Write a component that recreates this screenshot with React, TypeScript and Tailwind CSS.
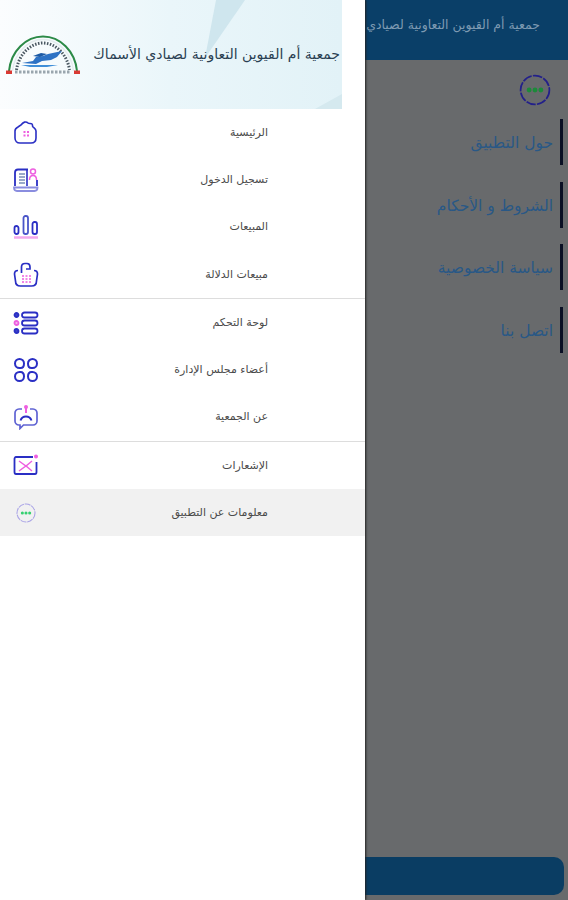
const arabic = { fontFamily: '"DejaVu Sans", "Noto Sans", sans-serif' };

const stroke = "#2a2fc4";
const accent = "#ee5fe0";

function HomeIcon() {
  return (
    <svg width="26" height="26" viewBox="0 0 26 26" fill="none" stroke={stroke} strokeWidth="1.6">
      <path d="M2 11c0-2 1-3 3-4l3-2c2-3 5-4 7-2 1 1 3 0 4 1s0 2 1 3 3 2 3 4v7c0 3-2 5-5 5H7c-3 0-5-2-5-5z" />
      <g fill={accent} stroke="none">
        <rect x="10.5" y="11" width="2" height="2" />
        <rect x="14" y="11" width="2" height="2" />
        <rect x="10.5" y="14.5" width="2" height="2" />
        <rect x="14" y="14.5" width="2" height="2" />
      </g>
    </svg>
  );
}

function LoginIcon() {
  return (
    <svg width="26" height="26" viewBox="0 0 26 26" fill="none" stroke={stroke} strokeWidth="1.8">
      <path d="M15 2.500H5C3 2.500 2 3.500 2 5.500V19" />
      <path d="M1 20.500h23.500c0 2.500-1 3.500-3 3.500H4c-2 0-3-1-3-3.500z" strokeOpacity="0.55" />
      <path d="M6 7h6M6 10h6M6 13h6M6 16h6" stroke="#7a8fb8" strokeWidth="1.500" />
      <path d="M14 2.500V19" strokeWidth="1.600" />
      <circle cx="20" cy="4.500" r="2.500" stroke={accent} strokeWidth="1.500" />
      <path d="M16.500 13c0-3 1.500-4.500 3.500-4.500s3.500 1.500 3.500 4.500" stroke={accent} strokeWidth="1.500" />
      <path d="M24 13v6" />
    </svg>
  );
}

function ChartIcon() {
  return (
    <svg width="26" height="26" viewBox="0 0 26 26" fill="none" stroke={stroke} strokeWidth="1.800">
      <rect x="10.500" y="2" width="4.500" height="18" rx="2" stroke="#4a55c8" />
      <rect x="1.500" y="12" width="4" height="8" rx="2" />
      <rect x="19.500" y="8" width="4.500" height="12" rx="2" />
      <path d="M1 23.500h24" stroke="#f3a8ec" strokeWidth="2.500" />
    </svg>
  );
}

function BasketIcon() {
  return (
    <svg width="26" height="26" viewBox="0 0 26 26" fill="none" stroke={stroke} strokeWidth="1.700">
      <path d="M5 9.500C2.500 9.500 1.500 11 1.500 13l1 7c0 3 2 5 5 5h11c3 0 5-2 5-5l1-7c0-2-1-3.500-3.500-3.500" />
      <path d="M8.500 12V6c0-2 1-3.500 3.500-3.500h2c2 0 3 1.500 3 3.500v2h-4" />
      <path d="M9 15h9M9 18h9M9 21h9" stroke={accent} strokeDasharray="2 1.500" strokeWidth="1.500" />
    </svg>
  );
}

function ListIcon() {
  return (
    <svg width="26" height="26" viewBox="0 0 26 26" fill="none" stroke={stroke} strokeWidth="1.800">
      <circle cx="3.500" cy="5" r="2" fill="#3e44c9" />
      <circle cx="3.500" cy="13" r="2" stroke={accent} fill="#f7b9f1" />
      <circle cx="3.500" cy="21" r="2" fill="#3e44c9" />
      <rect x="9" y="2.500" width="15.500" height="5" rx="2.500" />
      <rect x="9" y="10.500" width="15.500" height="5" rx="2.500" />
      <rect x="9" y="18.500" width="15.500" height="5" rx="2.500" />
    </svg>
  );
}

function GridIcon() {
  return (
    <svg width="26" height="26" viewBox="0 0 26 26" fill="none" stroke={stroke} strokeWidth="2">
      <path d="M6.500 2a4.500 4.500 0 0 1 4.500 4.500c0 2-1 4.500-3.500 4.500h-1a4.500 4.500 0 0 1 0-9z" />
      <path d="M19.500 2a4.500 4.500 0 0 0-4.500 4.500c0 2 1 4.500 3.500 4.500h1a4.500 4.500 0 0 0 0-9z" />
      <path d="M6.500 24a4.500 4.500 0 0 0 4.500-4.500c0-2-1-4.500-3.500-4.500h-1a4.500 4.500 0 0 0 0 9z" />
      <path d="M19.500 24a4.500 4.500 0 0 1-4.500-4.500c0-2 1-4.500 3.500-4.500h1a4.500 4.500 0 0 1 0 9z" />
    </svg>
  );
}

function ChatIcon() {
  return (
    <svg width="26" height="26" viewBox="0 0 26 26" fill="none" stroke={stroke} strokeWidth="1.700">
      <path d="M9 5H6C3.500 5 2 7 2 9v8c0 2 1.500 4 4 4h1v3.500l3.500-3.500H20c2.500 0 4-2 4-4V9c0-2-1.500-4-4-4h-3" strokeOpacity="0.75" />
      <path d="M13 3v6" stroke={accent} strokeWidth="2" />
      <circle cx="13" cy="3" r="2" fill={accent} stroke="none" />
      <path d="M7.500 16.500c1-3 3.500-4 5.500-4s4.500 1 5.500 4" strokeWidth="1.900" />
    </svg>
  );
}

function MailIcon() {
  return (
    <svg width="26" height="26" viewBox="0 0 26 26" fill="none" stroke={stroke} strokeWidth="1.800">
      <path d="M20 5H3C2 5 1.500 6 1.500 7v13c0 1 .5 2 1.500 2h19c1 0 1.500-1 1.500-2V10" />
      <path d="M6 9l7 5 6-5M6 19l7-5 6 5" stroke={accent} strokeWidth="1.400" />
      <circle cx="23" cy="4.500" r="2" fill={accent} stroke="none" />
    </svg>
  );
}

function DotsCircle({ size, ring, dot }: { size: number; ring: string; dot: string }) {
  return (
    <svg width={size} height={size} viewBox="0 0 30 30" fill="none">
      <circle cx="15" cy="15" r="13.500" stroke={ring} strokeWidth="1.600" strokeDasharray="9 1.200" />
      <g fill={dot}>
        <circle cx="9.500" cy="15" r="2.300" />
        <circle cx="15" cy="15" r="2.300" />
        <circle cx="20.500" cy="15" r="2.300" />
      </g>
    </svg>
  );
}

function Logo() {
  return (
    <svg width="74" height="40" viewBox="0 0 74 40" fill="none">
      <path d="M3 36C5 16 20 1.500 37 1.500S69 16 71 36" stroke="#2c8a47" strokeWidth="2" />
      <path d="M6.500 36C8.500 18 22 4.500 37 4.500S65.500 18 67.500 36" stroke="#e4ecee" strokeWidth="1.500" />
      <path d="M10.500 35C12.500 20 24 8 37 8s24.500 12 26.500 27" stroke="#4a5862" strokeWidth="3" strokeDasharray="1.500 1.500" />
      <path d="M16 28l11-2 3-4 7-1 5-2 14-3-5 6-6 3-9 1-6 3z" fill="#2d72c4" />
      <path d="M27 21l8-3 6 1-7 3z" fill="#1c5aa5" />
      <path d="M15 30h37l-11 2H24z" fill="#3f8ed8" />
      <path d="M9 37h56" stroke="#9aa6ae" strokeWidth="3" strokeDasharray="2.500 1.500" />
      <rect x="0" y="35.500" width="6" height="3.500" fill="#d93a34" />
      <rect x="68" y="35.500" width="6" height="3.500" fill="#d93a34" />
    </svg>
  );
}

const menu = [
  [
    { label: "الرئيسية", icon: <HomeIcon /> },
    { label: "تسجيل الدخول", icon: <LoginIcon /> },
    { label: "المبيعات", icon: <ChartIcon /> },
    { label: "مبيعات الدلالة", icon: <BasketIcon /> },
  ],
  [
    { label: "لوحة التحكم", icon: <ListIcon /> },
    { label: "أعضاء مجلس الإدارة", icon: <GridIcon /> },
    { label: "عن الجمعية", icon: <ChatIcon /> },
  ],
  [
    { label: "الإشعارات", icon: <MailIcon /> },
    { label: "معلومات عن التطبيق", icon: <DotsCircle size={20} ring="#a9a3e6" dot="#35d070" />, active: true },
  ],
];

const links = ["حول التطبيق", "الشروط و الأحكام", "سياسة الخصوصية", "اتصل بنا"];

export default function App() {
  return (
    <div className="relative h-[900px] w-[568px] overflow-hidden bg-[#686a6c]" style={arabic}>
      {/* page behind the scrim */}
      <div className="flex h-full flex-col">
        <div className="flex h-[60px] items-center justify-end overflow-hidden bg-[#0a3f68] pr-[28px] pb-[10px]">
          <span className="whitespace-nowrap text-[12.500px] text-[#7e9ab2]">جمعية أم القيوين التعاونية لصيادي الأسماك</span>
        </div>
        <div className="flex h-[59px] items-center justify-end pr-[17px]">
          <DotsCircle size={32} ring="#23208a" dot="#1c8a3a" />
        </div>
        <div className="flex flex-col gap-[16.500px]">
          {links.map((link) => (
            <div key={link} className="mr-[5px] flex h-[46px] items-center justify-end border-r-[3px] border-[#0a0f24] pt-[4px] pr-[7px]">
              <span className="whitespace-nowrap text-[15.500px] text-[#295886]">{link}</span>
            </div>
          ))}
        </div>
        <div className="flex-1" />
        <div className="mx-[4px] mb-[5px] h-[38px] rounded-[10px] bg-[#0a3d63]" />
      </div>

      {/* drawer */}
      <div className="absolute top-0 left-0 flex h-full w-[365px] flex-col bg-white shadow-[1px_0_2px_#222]">
        <div className="relative h-[109px] w-[342px] overflow-hidden bg-gradient-to-r from-[#fbfdfe] via-[#eaf6fa] to-[#e2f2f7]">
          <svg className="absolute inset-0" width="342" height="109" viewBox="0 0 342 109">
            <path d="M205 58L216 0H245z" fill="#cfe6ee" />
            <path d="M315 109L342 94V109z" fill="#d5e9ef" />
          </svg>
          <div className="relative flex h-full items-center justify-between pr-[2px] pl-[6px]">
            <Logo />
            <span className="whitespace-nowrap text-[14px] text-[#2a3f52]">جمعية أم القيوين التعاونية لصيادي الأسماك</span>
          </div>
        </div>
        <div className="flex flex-col">
          {menu.map((group, g) => (
            <div key={g} className={g < menu.length - 1 ? "border-b border-[#dddddd]" : ""}>
              {group.map((item) => (
                <div
                  key={item.label}
                  className={`flex h-[47.250px] items-center justify-between pr-[97px] pl-[13px] ${item.active ? "bg-[#f1f1f1]" : ""}`}
                >
                  <span className="flex w-[26px] justify-center">{item.icon}</span>
                  <span className="whitespace-nowrap pt-[1px] text-[11px] text-[#4a4a4a]">{item.label}</span>
                </div>
              ))}
            </div>
          ))}
        </div>
      </div>
    </div>
  );
}
